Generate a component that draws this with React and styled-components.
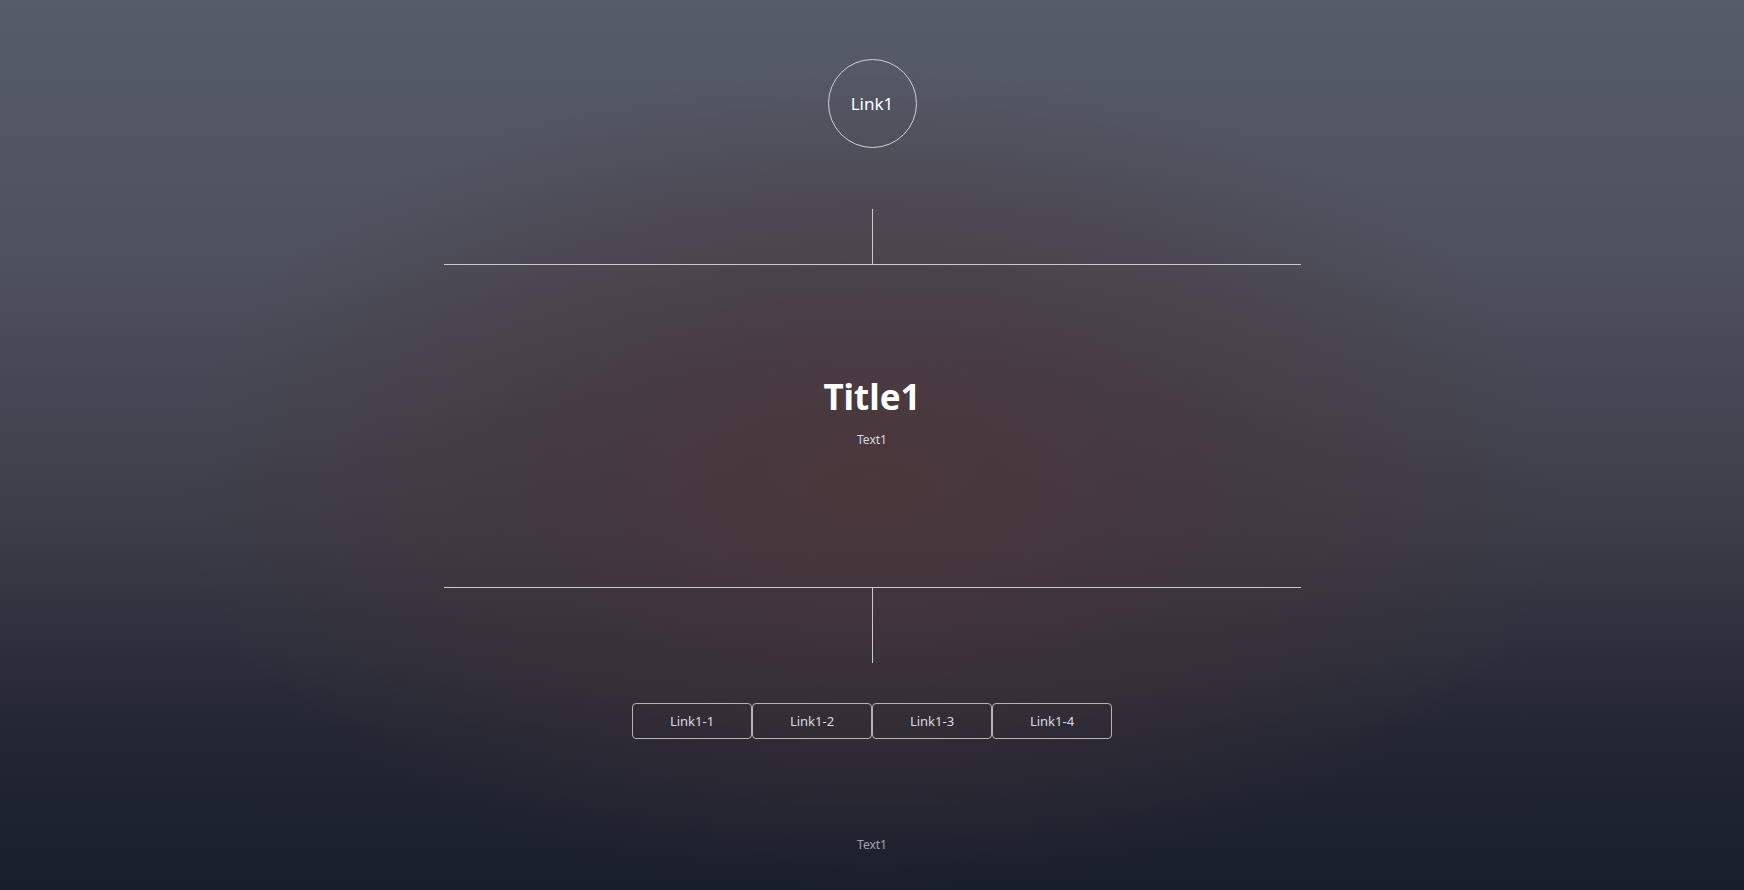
import React from "react";
import styled, { createGlobalStyle } from "styled-components";

const GlobalStyle = createGlobalStyle`
  html, body {
    margin: 0;
    padding: 0;
  }
  body {
    font-family: "Noto Sans", "Open Sans", sans-serif;
    color: #fff;
  }
  * {
    box-sizing: border-box;
  }
`;

const Page = styled.div`
  height: 100vh;
  overflow: hidden;
  display: flex;
  flex-direction: column;
  align-items: center;
  padding-top: 59px;
  background:
    radial-gradient(ellipse 40% 46% at 50% 54%, rgba(76, 54, 58, 0.9) 0%, rgba(72, 52, 56, 0.55) 45%, rgba(70, 52, 58, 0) 100%),
    linear-gradient(to bottom, #565c69 0%, #4d515d 30%, #3c3e49 58%, #232733 82%, #181e2c 100%);
`;

const CircleLink = styled.a`
  width: 89px;
  height: 89px;
  border-radius: 50%;
  border: 1px solid #d0d0d4;
  display: flex;
  align-items: center;
  justify-content: center;
  color: #fff;
  font-size: 17px;
  text-decoration: none;
`;

const Stem = styled.div`
  width: 1px;
  height: ${(p) => p.$h}px;
  margin-top: ${(p) => p.$mt || 0}px;
  background: #cacace;
`;

const Rule = styled.div`
  width: 857px;
  height: 1px;
  background: #cacace;
`;

const Hero = styled.section`
  height: 322px;
  padding-top: 110px;
  display: flex;
  flex-direction: column;
  align-items: center;
`;

const Title = styled.h1`
  margin: 0;
  font-size: 35px;
  line-height: 44px;
  font-weight: 700;
  color: #fff;
`;

const Caption = styled.p`
  margin: ${(p) => p.$mt}px 0 0;
  font-size: 12px;
  line-height: 18px;
  color: ${(p) => p.$color || "#d8d8dc"};
`;

const ButtonRow = styled.nav`
  display: flex;
  margin-top: 40px;
`;

const Button = styled.a`
  width: 120px;
  height: 36px;
  display: flex;
  align-items: center;
  justify-content: center;
  border: 1px solid #b4b4b8;
  border-radius: 4px;
  color: #dcdce0;
  font-size: 13px;
  text-decoration: none;
`;

export default function App() {
  return (
    <>
      <GlobalStyle />
      <Page>
        <CircleLink href="#">Link1</CircleLink>
        <Stem $h={55} $mt={61} />
        <Rule />
        <Hero>
          <Title>Title1</Title>
          <Caption $mt={12}>Text1</Caption>
        </Hero>
        <Rule />
        <Stem $h={75} />
        <ButtonRow>
          {["Link1-1", "Link1-2", "Link1-3", "Link1-4"].map((l) => (
            <Button key={l} href="#">
              {l}
            </Button>
          ))}
        </ButtonRow>
        <Caption $mt={97} $color="#a4a4ac">
          Text1
        </Caption>
      </Page>
    </>
  );
}
